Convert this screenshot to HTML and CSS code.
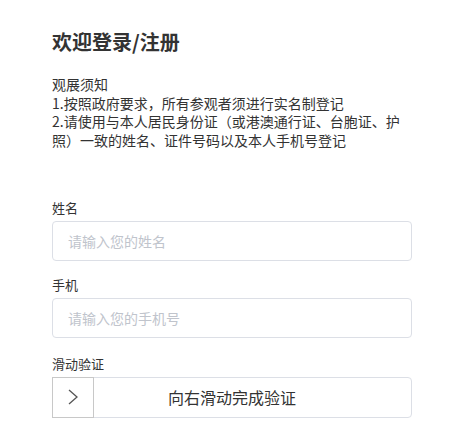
FILE: index.html
```html
<!DOCTYPE html>
<html lang="zh-CN">
<head>
    <meta charset="UTF-8">
    <meta name="viewport" content="width=device-width, initial-scale=1.0">
    <title>欢迎登录/注册</title>
    <link rel="stylesheet" href="styles.css">
</head>
<body>
    <div class="login">
        <h1>欢迎登录/注册</h1>
        <div class="notice">
            <p>观展须知</p>
            <p>1.按照政府要求，所有参观者须进行实名制登记</p>
            <p>2.请使用与本人居民身份证（或港澳通行证、台胞证、护照）一致的姓名、证件号码以及本人手机号登记</p>
        </div>

        <div class="form-item">
            <label>姓名</label>
            <input class="input" type="text" placeholder="请输入您的姓名">
        </div>
        <div class="form-item">
            <label>手机</label>
            <input class="input" type="text" placeholder="请输入您的手机号">
        </div>
        <div class="form-item slide-item">
            <label>滑动验证</label>
            <div class="slider">
                <div class="slider-text">向右滑动完成验证</div>
                <div class="slider-btn">
                    <svg width="14" height="16" viewBox="0 0 14 16">
                        <polyline points="3,1 11,8 3,15" fill="none" stroke="#555" stroke-width="1.3"/>
                    </svg>
                </div>
            </div>
        </div>
    </div>
</body>
</html>
```

FILE: styles.css
```css
* { box-sizing: border-box; }
body {
    margin: 0;
    background: #fff;
    font-family: "Microsoft YaHei", "Noto Sans CJK SC", sans-serif;
    color: #333;
}
.login {
    width: 360px;
    margin-left: 52px;
    padding-top: 28px;
}
h1 {
    margin: 0 0 19px;
    font-size: 20px;
    line-height: 28px;
    font-weight: bold;
    color: #333;
}
.notice p {
    margin: 0;
    font-size: 14px;
    line-height: 18.7px;
    color: #333;
}
.notice {
    margin-bottom: 48px;
}
.form-item {
    margin-bottom: 14px;
}
.form-item label {
    display: block;
    font-size: 13px;
    line-height: 20px;
    margin-bottom: 3px;
    color: #333;
}
.input {
    display: block;
    width: 100%;
    height: 40px;
    padding: 0 15px;
    border: 1px solid #dcdfe6;
    border-radius: 4px;
    font-family: inherit;
    font-size: 14px;
    color: #333;
    outline: none;
}
.input::placeholder { color: #c0c4cc; }
.slide-item { margin-top: 16px; }
.slider {
    position: relative;
    height: 41px;
    border: 1px solid #dcdfe6;
    border-radius: 4px;
}
.slider-text {
    height: 100%;
    display: flex;
    align-items: center;
    justify-content: center;
    font-size: 16px;
    color: #333;
}
.slider-btn {
    position: absolute;
    top: -1px;
    left: -1px;
    width: 42px;
    height: 41px;
    border: 1px solid #c8c8c8;
    display: flex;
    align-items: center;
    justify-content: center;
    background: #fff;
}
```
